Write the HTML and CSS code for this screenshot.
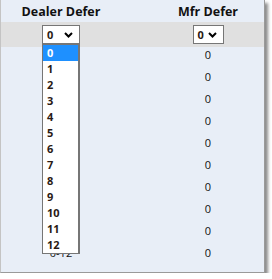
FILE: index.html
```html
<!DOCTYPE html>
<html lang="en">
<head>
    <meta charset="UTF-8">
    <title>Defer filter</title>
    <link rel="stylesheet" href="styles.css">
</head>
<body>

<div class="panel">
    <div class="grid">
        <div class="head">Dealer Defer</div>
        <div class="head"></div>
        <div class="head">Mfr Defer</div>

        <div class="filter">
            <div class="select-wrap">
                <div class="select wide">
                    <span>0</span>
                    <svg class="chev" width="9" height="6" viewBox="0 0 9 6"><polyline points="1,1 4.5,4.5 8,1" fill="none" stroke="#000" stroke-width="2"/></svg>
                </div>
                <ul class="listbox">
                    <li class="active">0</li>
                    <li>1</li>
                    <li>2</li>
                    <li>3</li>
                    <li>4</li>
                    <li>5</li>
                    <li>6</li>
                    <li>7</li>
                    <li>8</li>
                    <li>9</li>
                    <li>10</li>
                    <li>11</li>
                    <li>12</li>
                </ul>
            </div>
        </div>
        <div class="filter"></div>
        <div class="filter">
            <div class="select">
                <span>0</span>
                <svg class="chev" width="9" height="6" viewBox="0 0 9 6"><polyline points="1,1 4.5,4.5 8,1" fill="none" stroke="#000" stroke-width="2"/></svg>
            </div>
        </div>

        <div class="cell"></div><div class="cell"></div><div class="cell">0</div>
        <div class="cell"></div><div class="cell"></div><div class="cell">0</div>
        <div class="cell"></div><div class="cell"></div><div class="cell">0</div>
        <div class="cell"></div><div class="cell"></div><div class="cell">0</div>
        <div class="cell"></div><div class="cell"></div><div class="cell">0</div>
        <div class="cell"></div><div class="cell"></div><div class="cell">0</div>
        <div class="cell"></div><div class="cell"></div><div class="cell">0</div>
        <div class="cell"></div><div class="cell"></div><div class="cell">0</div>
        <div class="cell"></div><div class="cell"></div><div class="cell">0</div>
        <div class="cell">0-12</div><div class="cell"></div><div class="cell">0</div>
    </div>
</div>

</body>
</html>
```

FILE: styles.css
```css
* {
    margin: 0;
    padding: 0;
    box-sizing: border-box;
}

body {
    margin: 0;
    font-family: "Open Sans", "Liberation Sans", sans-serif;
    color: #111;
}

.panel {
    width: 265px;
    height: 273px;
    background: #e8eef7;
    border: 1px solid #9a9a9a;
    border-top: none;
    border-left-color: #c4c4c4;
    box-shadow: 3px 3px 3px rgba(0, 0, 0, 0.45);
    padding-bottom: 3px;
}

.grid {
    display: grid;
    grid-template-columns: 120px 31px 112px;
    grid-auto-rows: 22px;
}

.head {
    height: 24px;
    line-height: 24px;
    text-align: center;
    font-weight: bold;
    font-size: 12.5px;
    color: #111;
}

.filter {
    height: 25px;
    background: #e0e0e0;
    display: flex;
    justify-content: center;
    align-items: center;
}

.cell {
    line-height: 22px;
    text-align: center;
    font-size: 11px;
    color: #111;
}

.select-wrap {
    position: relative;
}

.select {
    height: 19px;
    width: 31px;
    border: 1px solid #767676;
    background: #fff;
    display: flex;
    align-items: center;
    padding-left: 4px;
    font-weight: bold;
    font-size: 11px;
    color: #2a1a14;
}

.select.wide {
    width: 38px;
}

.chev {
    margin-left: 4px;
}

.select.wide .chev {
    margin-left: 11px;
}

.listbox {
    position: absolute;
    top: 19px;
    left: 0;
    width: 38px;
    list-style: none;
    background: #fff;
    border: 1px solid #767676;
    border-right-width: 2px;
    z-index: 2;
}

.listbox li {
    height: 16px;
    line-height: 16px;
    padding-left: 4px;
    font-weight: bold;
    font-size: 11px;
    color: #2a1a14;
}

.listbox li.active {
    background: #1e90ff;
    color: #fff;
}
```
